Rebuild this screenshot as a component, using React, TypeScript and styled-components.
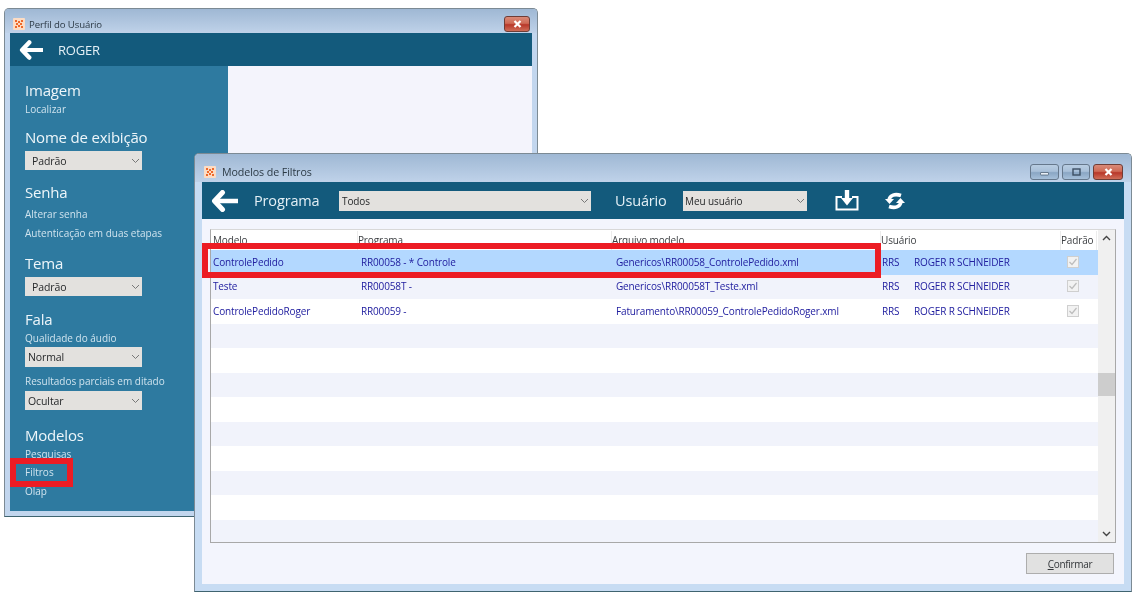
import React from "react";
import styled, { createGlobalStyle } from "styled-components";

const Global = createGlobalStyle`
  html, body { margin: 0; padding: 0; background: #fff; }
  body { font-family: "Open Sans", "Noto Sans", "Liberation Sans", sans-serif; }
`;

const Desktop = styled.div`
  position: relative;
  width: 1138px;
  height: 600px;
  overflow: hidden;
  background: #fff;
  filter: blur(0.35px);
`;

const Win = styled.div<{ $x: number; $y: number; $w: number; $h: number; $pad: number; $frame: string }>`
  position: absolute;
  left: ${(p) => p.$x}px;
  top: ${(p) => p.$y}px;
  width: ${(p) => p.$w}px;
  height: ${(p) => p.$h}px;
  box-sizing: border-box;
  display: flex;
  flex-direction: column;
  padding: 0 ${(p) => p.$pad}px ${(p) => p.$pad}px;
  background: ${(p) => p.$frame};
  border: 1px solid #7c8a94;
  border-bottom-color: #3f6470;
  border-radius: 5px 5px 0 0;
`;

const TitleBar = styled.div<{ $h: number; $pad: number; $pt: number; $pl: number; $pr: number; $gap: number; $fs: number }>`
  height: ${(p) => p.$h}px;
  box-sizing: border-box;
  flex: none;
  margin: 0 -${(p) => p.$pad}px;
  padding: ${(p) => p.$pt}px ${(p) => p.$pr}px 0 ${(p) => p.$pl}px;
  display: flex;
  align-items: center;
  gap: ${(p) => p.$gap}px;
  background: linear-gradient(#9fb8d4, #bfd2e9);
  border-radius: 4px 4px 0 0;
  font-size: ${(p) => p.$fs}px;
  color: #2c3a46;
  letter-spacing: -0.1px;
`;

const TitleText = styled.span`
  flex: 1;
`;

const AppIconBox = styled.svg`
  width: 12px;
  height: 12px;
  flex: none;
`;

const WinButtons = styled.div`
  display: flex;
  gap: 3px;
`;

const WinButton = styled.div<{ $close?: boolean; $w: number }>`
  width: ${(p) => p.$w}px;
  height: 16px;
  box-sizing: border-box;
  display: flex;
  align-items: center;
  justify-content: center;
  border: 1px solid ${(p) => (p.$close ? "#6f3d36" : "#66788c")};
  border-radius: 3px;
  background: ${(p) =>
    p.$close
      ? "linear-gradient(#d98a78 0%, #cf6a56 45%, #b8382a 55%, #cf6d58 100%)"
      : "linear-gradient(#b9cde2 0%, #a9c0d9 45%, #8aa6c4 55%, #a6c0da 100%)"};
`;

const Header = styled.div<{ $h: number }>`
  height: ${(p) => p.$h}px;
  flex: none;
  display: flex;
  align-items: center;
  background: #135a7c;
  color: #e4f0f6;
`;

const BackIcon = styled.svg<{ $ml: number; $w: number; $h: number }>`
  width: ${(p) => p.$w}px;
  height: ${(p) => p.$h}px;
  margin-left: ${(p) => p.$ml}px;
  flex: none;
`;

const HeaderName = styled.span`
  margin-left: 15px;
  font-size: 13px;
  letter-spacing: -0.2px;
`;

const HeaderLabel = styled.span<{ $ml: number; $w: number }>`
  margin-left: ${(p) => p.$ml}px;
  width: ${(p) => p.$w}px;
  font-size: 14.5px;
  letter-spacing: -0.15px;
  flex: none;
`;

const Panels = styled.div`
  flex: 1;
  display: flex;
  min-height: 0;
`;

const Sidebar = styled.div`
  width: 218px;
  flex: none;
  box-sizing: border-box;
  padding: 13px 0 0 15px;
  background: #2e7aa0;
  color: #e6f1f7;
`;

const BlankPane = styled.div`
  flex: 1;
  background: #f4f4fc;
`;

const Heading = styled.div<{ $mt?: number }>`
  height: 22px;
  line-height: 22px;
  margin-top: ${(p) => p.$mt ?? 0}px;
  font-size: 15px;
  letter-spacing: -0.2px;
  color: #eef6fa;
`;

const SideLink = styled.div<{ $mt?: number }>`
  height: 18px;
  line-height: 18px;
  margin-top: ${(p) => p.$mt ?? 0}px;
  font-size: 10px;
  letter-spacing: 0;
  color: #cfe3ee;
`;

const Select = styled.div<{ $w: number; $h?: number; $mt?: number; $ml?: number; $pl?: number; $fs?: number }>`
  width: ${(p) => p.$w}px;
  height: ${(p) => p.$h ?? 19}px;
  margin-top: ${(p) => p.$mt ?? 0}px;
  margin-left: ${(p) => p.$ml ?? 0}px;
  box-sizing: border-box;
  flex: none;
  display: flex;
  align-items: center;
  justify-content: space-between;
  padding: 0 2px 0 ${(p) => p.$pl ?? 3}px;
  background: #e3e1de;
  font-size: ${(p) => p.$fs ?? 10.5}px;
  letter-spacing: -0.1px;
  color: #26282a;
`;

const Chevron = styled.svg`
  width: 9px;
  height: 6px;
  flex: none;
`;

const Body = styled.div`
  flex: 1;
  min-height: 0;
  display: flex;
  flex-direction: column;
  padding: 10px 8px 9px;
  background: #f3f5fd;
`;

const TableBox = styled.div`
  height: 314px;
  flex: none;
  box-sizing: border-box;
  display: flex;
  background: #fff;
  border: 1px solid #a8a8a8;
  border-top-color: #d8d8d8;
`;

const TableMain = styled.div`
  flex: 1;
  min-width: 0;
  overflow: hidden;
  padding-top: 1px;
`;

const HeadRow = styled.div`
  height: 19px;
  display: grid;
  grid-template-columns: 147px 254px 269px 180px 36px;
  background: #fff;
`;

const HeadCell = styled.div<{ $pl: number }>`
  padding-left: ${(p) => p.$pl}px;
  line-height: 19px;
  font-size: 10px;
  letter-spacing: -0.15px;
  color: #3c3f42;
  border-right: 1px solid #ececec;
`;

const Row = styled.div<{ $kind: "sel" | "alt" | "plain" }>`
  height: 24.5px;
  box-sizing: border-box;
  padding: 0 0 1px 2px;
  display: grid;
  grid-template-columns: 148px 255px 266px 32px 153px auto;
  align-items: center;
  font-size: 10px;
  letter-spacing: -0.15px;
  color: #2220a0;
  background: ${(p) => (p.$kind === "sel" ? "#b3d8ff" : p.$kind === "alt" ? "#f1f3fb" : "#fff")};
`;

const Cell = styled.span`
  white-space: nowrap;
`;

const Check = styled.svg`
  width: 12px;
  height: 12px;
  justify-self: start;
`;

const ScrollBar = styled.div`
  width: 17px;
  flex: none;
  display: flex;
  flex-direction: column;
  align-items: center;
  background: #f0f0f0;
  padding: 5px 0;
  box-sizing: border-box;
  justify-content: space-between;
  position: relative;
`;

const ScrollThumb = styled.div`
  position: absolute;
  left: 0;
  right: 0;
  top: 143px;
  height: 23px;
  background: #cdcdcd;
`;

const Footer = styled.div`
  display: flex;
  justify-content: flex-end;
  padding: 10px 2px 0 0;
`;

const Confirm = styled.div`
  width: 88px;
  height: 21px;
  box-sizing: border-box;
  display: flex;
  align-items: center;
  justify-content: center;
  background: #e1e1e1;
  border: 1px solid #adadad;
  font-size: 10px;
  letter-spacing: -0.3px;
  color: #33363a;
`;

const Underlined = styled.span`
  text-decoration: underline;
`;

const ToolIcon = styled.svg<{ $ml: number; $w: number; $h: number }>`
  width: ${(p) => p.$w}px;
  height: ${(p) => p.$h}px;
  margin-left: ${(p) => p.$ml}px;
  flex: none;
`;

const Highlight = styled.div<{ $x: number; $y: number; $w: number; $h: number }>`
  position: absolute;
  left: ${(p) => p.$x}px;
  top: ${(p) => p.$y}px;
  width: ${(p) => p.$w}px;
  height: ${(p) => p.$h}px;
  box-sizing: border-box;
  border: 6px solid #ec1c24;
`;

const AppIcon = () => (
  <AppIconBox viewBox="0 0 12 12">
    <rect width="12" height="12" rx="1" fill="#fcdcc4" />
    <g fill="#ee6a2c">
      <rect x="2" y="2" width="2" height="2" />
      <rect x="8" y="2" width="2" height="2" />
      <rect x="5" y="3" width="2" height="2" />
      <rect x="3" y="5" width="2" height="2" />
      <rect x="7" y="5" width="2" height="2" />
      <rect x="5" y="7" width="2" height="2" />
      <rect x="2" y="8" width="2" height="2" />
      <rect x="8" y="8" width="2" height="2" />
    </g>
  </AppIconBox>
);

const CloseGlyph = () => (
  <svg width="9" height="8" viewBox="0 0 9 8">
    <path d="M1.5 1 7.5 7M7.5 1 1.5 7" stroke="#fff" strokeWidth="2.2" />
  </svg>
);

const MinGlyph = () => (
  <svg width="9" height="8" viewBox="0 0 9 8">
    <rect x="0.5" y="4.5" width="8" height="2.5" rx="0.5" fill="#e9f0f7" stroke="#44566a" strokeWidth="0.7" />
  </svg>
);

const MaxGlyph = () => (
  <svg width="9" height="8" viewBox="0 0 9 8">
    <rect x="1" y="1" width="7" height="6" fill="none" stroke="#3d4f63" strokeWidth="1.4" />
  </svg>
);

const Back = ({ ml, w, h }: { ml: number; w: number; h: number }) => (
  <BackIcon $ml={ml} $w={w} $h={h} viewBox="0 0 27 22">
    <path d="M11.500 2.500 3.500 11l8 8.500" fill="none" stroke="#fff" strokeWidth="5" strokeLinecap="round" strokeLinejoin="round" />
    <path d="M5 11h22" stroke="#fff" strokeWidth="4.500" />
  </BackIcon>
);

const Down = () => (
  <Chevron viewBox="0 0 9 6">
    <path d="M1 1l3.500 3.500L8 1" fill="none" stroke="#777" strokeWidth="1" />
  </Chevron>
);

const SmallCheck = () => (
  <Check viewBox="0 0 12 12">
    <rect x="0.5" y="0.5" width="11" height="11" fill="#f2f2f2" stroke="#cfcfcf" />
    <path d="M2.500 6l2.500 2.500L9.500 3" fill="none" stroke="#bdbdbd" strokeWidth="1.200" />
  </Check>
);

const rows = [
  ["ControlePedido", "RR00058 - * Controle", "Genericos\\RR00058_ControlePedido.xml"],
  ["Teste", "RR00058T -", "Genericos\\RR00058T_Teste.xml"],
  ["ControlePedidoRoger", "RR00059 -", "Faturamento\\RR00059_ControlePedidoRoger.xml"],
];

const TOTAL_ROWS = 13;

export default function App() {
  return (
    <Desktop>
      <Global />
      <Win $x={4} $y={8} $w={534} $h={509} $pad={5} $frame="#c2d6ee">
        <TitleBar $h={24} $pad={5} $pt={6} $pl={8} $pr={7} $gap={4} $fs={9.6}>
          <AppIcon />
          <TitleText>Perfil do Usuário</TitleText>
          <WinButtons>
            <WinButton $close $w={26}>
              <CloseGlyph />
            </WinButton>
          </WinButtons>
        </TitleBar>
        <Header $h={33}>
          <Back ml={9} w={24} h={20} />
          <HeaderName>ROGER</HeaderName>
        </Header>
        <Panels>
          <Sidebar>
            <Heading>Imagem</Heading>
            <SideLink $mt={-1}>Localizar</SideLink>
            <Heading $mt={8}>Nome de exibição</Heading>
            <Select $w={117} $mt={3} $pl={7}>
              Padrão
              <Down />
            </Select>
            <Heading $mt={11}>Senha</Heading>
            <SideLink $mt={2}>Alterar senha</SideLink>
            <SideLink $mt={1}>Autenticação em duas etapas</SideLink>
            <Heading $mt={10}>Tema</Heading>
            <Select $w={117} $mt={3} $pl={7}>
              Padrão
              <Down />
            </Select>
            <Heading $mt={12}>Fala</Heading>
            <SideLink $mt={-1}>Qualidade do áudio</SideLink>
            <Select $w={117} $h={20}>
              Normal
              <Down />
            </Select>
            <SideLink $mt={5}>Resultados parciais em ditado</SideLink>
            <Select $w={117} $mt={1}>
              Ocultar
              <Down />
            </Select>
            <Heading $mt={14}>Modelos</Heading>
            <SideLink $mt={-1}>Pesquisas</SideLink>
            <SideLink>Filtros</SideLink>
            <SideLink $mt={1}>Olap</SideLink>
          </Sidebar>
          <BlankPane />
        </Panels>
      </Win>

      <Win $x={194} $y={153} $w={938} $h={439} $pad={7} $frame="#c7dcf3">
        <TitleBar $h={28} $pad={7} $pt={7} $pl={9} $pr={8} $gap={6} $fs={10.7}>
          <AppIcon />
          <TitleText>Modelos de Filtros</TitleText>
          <WinButtons>
            <WinButton $w={29}>
              <MinGlyph />
            </WinButton>
            <WinButton $w={28}>
              <MaxGlyph />
            </WinButton>
            <WinButton $close $w={30}>
              <CloseGlyph />
            </WinButton>
          </WinButtons>
        </TitleBar>
        <Header $h={37}>
          <Back ml={9} w={27} h={22} />
          <HeaderLabel $ml={16} $w={85}>Programa</HeaderLabel>
          <Select $w={252} $h={20} $pl={3} $fs={10}>
            Todos
            <Down />
          </Select>
          <HeaderLabel $ml={24} $w={68}>Usuário</HeaderLabel>
          <Select $w={124} $h={20} $pl={2} $fs={10}>
            Meu usuário
            <Down />
          </Select>
          <ToolIcon $ml={28} $w={24} $h={21} viewBox="0 0 24 21">
            <path d="M7 7H1.500v12.500h21V7H17" fill="none" stroke="#fff" strokeWidth="2" />
            <path d="M9.800 0h4.400v8h3.800L12 15.500 6 8h3.800z" fill="#fff" />
          </ToolIcon>
          <ToolIcon $ml={26} $w={20} $h={18} viewBox="0 0 20 18">
            <path d="M16 3.500C10 1.500 5 3 4 8" fill="none" stroke="#fff" strokeWidth="3.600" />
            <path d="M0 7h9l-4.500 5z" fill="#fff" />
            <path d="M4 14.500c6 2 11 .5 12-4.500" fill="none" stroke="#fff" strokeWidth="3.600" />
            <path d="M20 11h-9l4.500-5z" fill="#fff" />
          </ToolIcon>
        </Header>
        <Body>
          <TableBox>
            <TableMain>
              <HeadRow>
                <HeadCell $pl={2}>Modelo</HeadCell>
                <HeadCell $pl={0}>Programa</HeadCell>
                <HeadCell $pl={0}>Arquivo modelo</HeadCell>
                <HeadCell $pl={0}>Usuário</HeadCell>
                <HeadCell $pl={0}>Padrão</HeadCell>
              </HeadRow>
              {Array.from({ length: TOTAL_ROWS }, (_, i) => {
                const r = rows[i];
                const kind = i === 0 ? "sel" : i % 2 === 1 ? "alt" : "plain";
                return (
                  <Row key={i} $kind={kind}>
                    {r && (
                      <>
                        <Cell>{r[0]}</Cell>
                        <Cell>{r[1]}</Cell>
                        <Cell>{r[2]}</Cell>
                        <Cell>RRS</Cell>
                        <Cell>ROGER R SCHNEIDER</Cell>
                        <SmallCheck />
                      </>
                    )}
                  </Row>
                );
              })}
            </TableMain>
            <ScrollBar>
              <svg width="9" height="6" viewBox="0 0 9 6">
                <path d="M1 5l3.500-3.500L8 5" fill="none" stroke="#444" strokeWidth="1.400" />
              </svg>
              <ScrollThumb />
              <svg width="9" height="6" viewBox="0 0 9 6">
                <path d="M1 1l3.500 3.500L8 1" fill="none" stroke="#444" strokeWidth="1.400" />
              </svg>
            </ScrollBar>
          </TableBox>
          <Footer>
            <Confirm>
              <span>
                <Underlined>C</Underlined>onfirmar
              </span>
            </Confirm>
          </Footer>
        </Body>
      </Win>

      <Highlight $x={10} $y={458} $w={63} $h={29} />
      <Highlight $x={202} $y={243} $w={679} $h={35} />
    </Desktop>
  );
}
